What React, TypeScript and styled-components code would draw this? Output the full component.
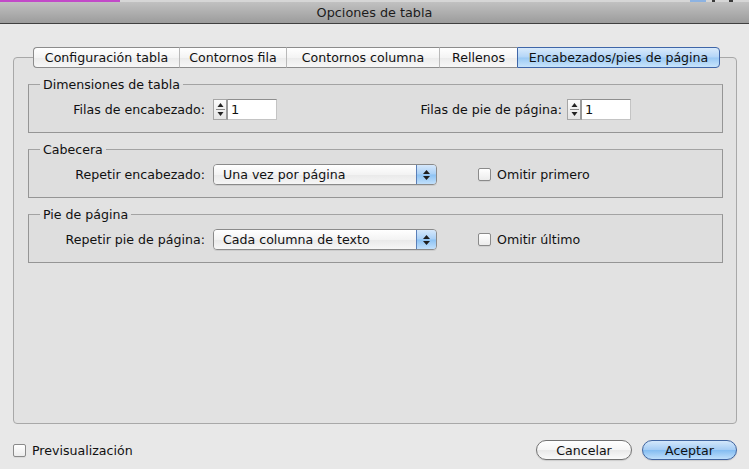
import React from "react";
import styled, { createGlobalStyle } from "styled-components";

const Global = createGlobalStyle`
  html, body { margin: 0; padding: 0; background: #e8e8e8; }
  body { font-family: "DejaVu Sans", "Noto Sans", sans-serif; font-size: 12.6px; color: #111; }
  * { box-sizing: border-box; }
`;

const Window = styled.div`
  width: 749px;
  height: 469px;
  display: flex;
  flex-direction: column;
  background: #e8e8e8;
  overflow: hidden;
`;

const TopStrip = styled.div`
  height: 2px;
  flex: none;
  background: linear-gradient(
    to right,
    #c24ac8 0 120px,
    #d6d6d6 120px 690px,
    #8db3e2 690px 706px,
    #d6d6d6 706px 712px,
    #3a3a3a 712px 715px,
    #d6d6d6 715px 729px,
    #3a3a3a 729px 733px,
    #d6d6d6 733px
  );
`;

const TitleBar = styled.div`
  height: 22px;
  flex: none;
  display: flex;
  align-items: center;
  justify-content: center;
  background: linear-gradient(#c1c1c1, #9c9c9c);
  border-bottom: 1px solid #404040;
  font-size: 12.8px;
  color: #1c1c1c;
`;

const Content = styled.div`
  flex: 1;
  display: flex;
  flex-direction: column;
  padding: 23px 12px 0 13px;
`;

const TabsRow = styled.div`
  position: relative;
  z-index: 1;
  display: flex;
  height: 21px;
  margin-left: 20px;
`;

const Tab = styled.div<{ $w: number; $active?: boolean; $first?: boolean; $last?: boolean }>`
  width: ${(p) => p.$w}px;
  height: 21px;
  display: flex;
  align-items: center;
  justify-content: center;
  white-space: nowrap;
  color: #111;
  border-top: 1px solid ${(p) => (p.$active ? "#3f66a8" : "#8c8c8c")};
  border-bottom: 1px solid ${(p) => (p.$active ? "#3f66a8" : "#8c8c8c")};
  border-right: ${(p) => (p.$last || p.$active ? `1px solid ${p.$active ? "#3f66a8" : "#8c8c8c"}` : "none")};
  border-left: 1px solid ${(p) => (p.$active ? "#3f66a8" : p.$first ? "#8c8c8c" : "#b9b9b9")};
  border-radius: ${(p) => (p.$first ? "4px 0 0 4px" : p.$last ? "0 4px 4px 0" : "0")};
  background: ${(p) =>
    p.$active
      ? "linear-gradient(#d9eafb, #b3d5f7 48%, #9ac9f4 52%, #c8e4fb)"
      : "linear-gradient(#ffffff, #f4f4f4 50%, #ebebeb 52%, #f7f7f7)"};
`;

const Panel = styled.div`
  margin-top: -11px;
  height: 367px;
  border: 1px solid #a8a8a8;
  border-radius: 4px;
  background: #e2e2e2;
  padding: 19px 13px 0 14px;
  display: flex;
  flex-direction: column;
  gap: 9px;
`;

const Group = styled.fieldset`
  margin: 0;
  min-inline-size: 0;
  border: 1px solid #959595;
  border-top-color: #a3a3a3;
  border-radius: 0;
  padding: 7px 0 12px 0;
  background: rgba(0, 0, 0, 0.015);
`;

const Legend = styled.legend`
  margin-left: 11px;
  padding: 0 3px;
  line-height: 15px;
  color: #111;
`;

const Row = styled.div`
  display: flex;
  align-items: center;
  height: 21px;
`;

const Label = styled.div<{ $w: number; $gap: number }>`
  width: ${(p) => p.$w}px;
  margin-right: ${(p) => p.$gap}px;
  text-align: right;
  white-space: nowrap;
`;

const StepperBox = styled.div`
  width: 15px;
  height: 21px;
  display: flex;
  flex-direction: column;
  align-items: center;
  justify-content: center;
  border: 1px solid #a6a6a6;
  border-right: 2px solid #9a9a9a;
  background: linear-gradient(#fbfbfb, #e4e4e4);
`;

const NumberInput = styled.div`
  width: 49px;
  height: 21px;
  background: #fff;
  border: 1px solid #c4c4c4;
  border-top-color: #8e8e8e;
  border-left: none;
  padding-left: 3px;
  display: flex;
  align-items: center;
  font-size: 13px;
`;

const Select = styled.div<{ $w: number }>`
  width: ${(p) => p.$w}px;
  height: 21px;
  display: flex;
  border-radius: 4px;
  overflow: hidden;
  border: 1px solid #8a8a8a;
  box-shadow: 0 1px 0 rgba(0, 0, 0, 0.08);
`;

const SelectText = styled.div`
  flex: 1;
  display: flex;
  align-items: center;
  padding-left: 9px;
  background: linear-gradient(#ffffff, #f3f3f3 50%, #e9e9e9 52%, #f6f6f6);
  white-space: nowrap;
`;

const SelectArrows = styled.div`
  width: 20px;
  display: flex;
  flex-direction: column;
  align-items: center;
  justify-content: center;
  border-left: 1px solid #5a7fb8;
  background: linear-gradient(#d6e8fb, #a9d0f6 48%, #8cc2f3 52%, #c2e0fb);
`;

const CheckRow = styled.label<{ $ml: number }>`
  display: flex;
  align-items: center;
  gap: 6px;
  margin-left: ${(p) => p.$ml}px;
  white-space: nowrap;
`;

const Box = styled.span`
  width: 13px;
  height: 13px;
  border: 1px solid #8a8a8a;
  border-radius: 2px;
  background: linear-gradient(#ffffff, #ececec);
  box-shadow: 0 1px 0 rgba(0, 0, 0, 0.06);
`;

const Footer = styled.div`
  margin-top: 16px;
  height: 20px;
  display: flex;
  align-items: center;
`;

const Buttons = styled.div`
  margin-left: auto;
  display: flex;
  gap: 10px;
`;

const Button = styled.div<{ $primary?: boolean; $w: number }>`
  width: ${(p) => p.$w}px;
  height: 20px;
  border-radius: 10px;
  display: flex;
  align-items: center;
  justify-content: center;
  color: #111;
  border: 1px solid ${(p) => (p.$primary ? "#40649f" : "#727272")};
  background: ${(p) =>
    p.$primary
      ? "linear-gradient(#d3e7fb, #a6cdf5 48%, #84bdf1 52%, #bfdffb)"
      : "linear-gradient(#ffffff, #f5f5f5 50%, #e9e9e9 52%, #fafafa)"};
  box-shadow: 0 1px 1px rgba(0, 0, 0, 0.12);
`;

const Updown = ({ gap = 2 }: { gap?: number }) => (
  <svg width="7" height={8 + gap} viewBox={`0 0 7 ${8 + gap}`}>
    <path d="M3.5 0 L7 4 L0 4 Z" fill="#1e1e1e" />
    <path d={`M0 ${4 + gap} L7 ${4 + gap} L3.5 ${8 + gap} Z`} fill="#1e1e1e" />
  </svg>
);

const StepperArrows = () => (
  <svg width="9" height="17" viewBox="0 0 9 17">
    <path d="M4.5 2 L7.5 6 L1.5 6 Z" fill="#222" />
    <rect x="0" y="8" width="9" height="1" fill="#8a8a8a" />
    <path d="M1.5 11 L7.5 11 L4.5 15 Z" fill="#222" />
  </svg>
);

const Stepper = ({ value }: { value: string }) => (
  <>
    <StepperBox>
      <StepperArrows />
    </StepperBox>
    <NumberInput>{value}</NumberInput>
  </>
);

const tabs = [
  { label: "Configuración tabla", w: 146 },
  { label: "Contornos fila", w: 107 },
  { label: "Contornos columna", w: 153 },
  { label: "Rellenos", w: 78 },
  { label: "Encabezados/pies de página", w: 203, active: true },
];

export default function App() {
  return (
    <>
      <Global />
      <Window>
        <TopStrip />
        <TitleBar>Opciones de tabla</TitleBar>
        <Content>
          <TabsRow>
            {tabs.map((t, i) => (
              <Tab
                key={t.label}
                $w={t.w}
                $active={t.active}
                $first={i === 0}
                $last={i === tabs.length - 1}
              >
                {t.label}
              </Tab>
            ))}
          </TabsRow>
          <Panel>
            <Group>
              <Legend>Dimensiones de tabla</Legend>
              <Row>
                <Label $w={176} $gap={8}>Filas de encabezado:</Label>
                <Stepper value="1" />
                <Label $w={285} $gap={5}>Filas de pie de página:</Label>
                <Stepper value="1" />
              </Row>
            </Group>
            <Group>
              <Legend>Cabecera</Legend>
              <Row>
                <Label $w={176} $gap={8}>Repetir encabezado:</Label>
                <Select $w={224}>
                  <SelectText>Una vez por página</SelectText>
                  <SelectArrows>
                    <Updown />
                  </SelectArrows>
                </Select>
                <CheckRow $ml={41}>
                  <Box />
                  Omitir primero
                </CheckRow>
              </Row>
            </Group>
            <Group>
              <Legend>Pie de página</Legend>
              <Row>
                <Label $w={176} $gap={8}>Repetir pie de página:</Label>
                <Select $w={224}>
                  <SelectText>Cada columna de texto</SelectText>
                  <SelectArrows>
                    <Updown />
                  </SelectArrows>
                </Select>
                <CheckRow $ml={41}>
                  <Box />
                  Omitir último
                </CheckRow>
              </Row>
            </Group>
          </Panel>
          <Footer>
            <CheckRow $ml={0}>
              <Box />
              Previsualización
            </CheckRow>
            <Buttons>
              <Button $w={96}>Cancelar</Button>
              <Button $w={95} $primary>Aceptar</Button>
            </Buttons>
          </Footer>
        </Content>
      </Window>
    </>
  );
}
